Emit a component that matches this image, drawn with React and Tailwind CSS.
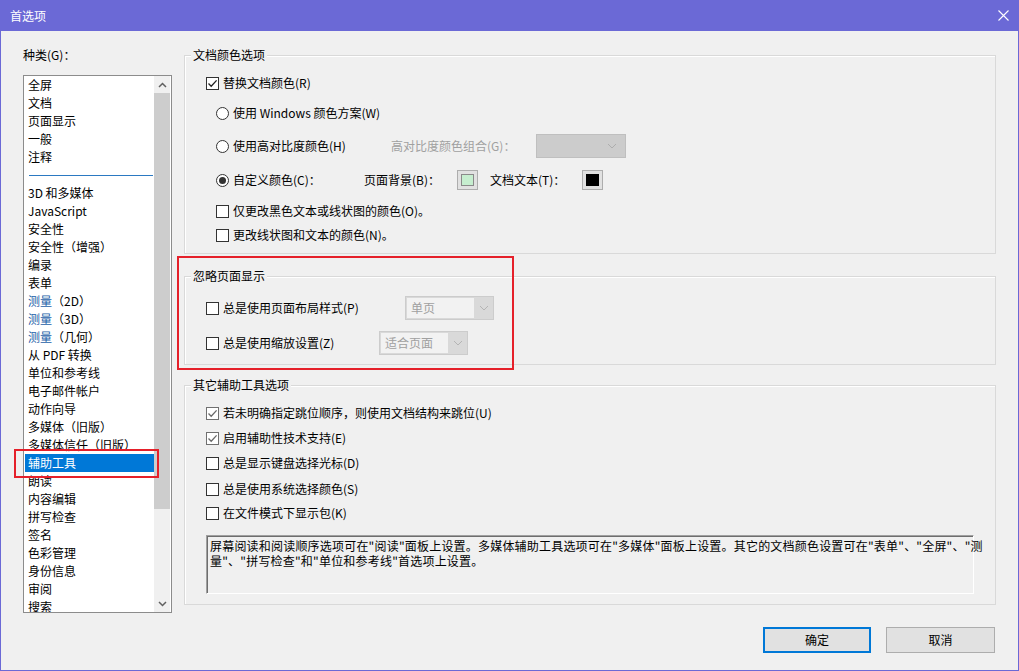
import React from "react";

const FONT = "font-['Noto_Sans_CJK_SC','Noto_Sans',sans-serif]";

function Check({ checked, dim }) {
  return (
    <span
      className={`w-[13px] h-[13px] border ${dim ? "border-[#707070]" : "border-[#333333]"} bg-white flex items-center justify-center shrink-0`}
    >
      {checked && (
        <svg width="11" height="11" viewBox="0 0 11 11">
          <path d="M1.5 5.5 L4.2 8.3 L9.6 2.4" fill="none" stroke={dim ? "#6a6a6a" : "#222222"} strokeWidth="1.3" />
        </svg>
      )}
    </span>
  );
}

function Radio({ checked }) {
  return (
    <span className="w-[13px] h-[13px] rounded-full border border-[#333333] bg-white flex items-center justify-center shrink-0">
      {checked && <span className="w-[7px] h-[7px] rounded-full bg-[#333333]" />}
    </span>
  );
}

function Chevron({ color = "#a0a0a0" }) {
  return (
    <svg width="10" height="6" viewBox="0 0 10 6">
      <path d="M1 1 L5 5 L9 1" fill="none" stroke={color} strokeWidth="1" />
    </svg>
  );
}

function Group({ title, className, children }) {
  return (
    <div className={`relative border border-[#d9d9d9] shadow-[inset_1px_1px_0_#ffffff] ${className}`}>
      <span className="absolute -top-[9px] left-[6px] px-[2px] bg-[#f0f0f0] leading-[16px] text-[12px] text-black">
        {title}
      </span>
      {children}
    </div>
  );
}

function Combo({ text, className }) {
  return (
    <div className={`h-[24px] border border-[#cccccc] bg-[#d9d9d9] flex ${className}`}>
      <div className="flex-1 m-[1px] bg-[#f2f2f2] text-[#a0a0a0] leading-[20px] pl-[4px] text-[12px]">{text}</div>
      <div className="w-[18px] flex items-center justify-center">
        <Chevron color="#b4b4b4" />
      </div>
    </div>
  );
}

const items = [
  "全屏",
  "文档",
  "页面显示",
  "一般",
  "注释",
  "__sep",
  "3D 和多媒体",
  "JavaScript",
  "安全性",
  "安全性（增强）",
  "编录",
  "表单",
  "__m（2D）",
  "__m（3D）",
  "__m（几何）",
  "从 PDF 转换",
  "单位和参考线",
  "电子邮件帐户",
  "动作向导",
  "多媒体（旧版）",
  "多媒体信任（旧版）",
  "__sel辅助工具",
  "朗读",
  "内容编辑",
  "拼写检查",
  "签名",
  "色彩管理",
  "身份信息",
  "审阅",
  "搜索",
];

function ListItem({ t }) {
  if (t === "__sep") {
    return (
      <div className="h-[18px] shrink-0 flex items-center pl-[5px] pr-[1px]">
        <div className="w-full h-px bg-[#2b79c2] mt-[1px]" />
      </div>
    );
  }
  if (t.startsWith("__sel")) {
    return (
      <div className="h-[18px] shrink-0 ml-[1px] bg-[#0078d7] text-white leading-[18px] pl-[3px] whitespace-nowrap">
        {t.slice(5)}
      </div>
    );
  }
  if (t.startsWith("__m")) {
    return (
      <div className="h-[18px] shrink-0 leading-[18px] pl-[4px] whitespace-nowrap">
        <span className="text-[#1d5fa8]">测量</span>
        {t.slice(3)}
      </div>
    );
  }
  return <div className="h-[18px] shrink-0 leading-[18px] pl-[4px] whitespace-nowrap">{t}</div>;
}

export default function App() {
  return (
    <div className={`w-[1019px] h-[671px] bg-[#f0f0f0] relative flex flex-col overflow-hidden text-[12px] text-black ${FONT}`}>
      {/* Title bar */}
      <div className="h-[31px] bg-[#6b69d6] flex items-center justify-between pl-[10px] pr-[10px] shrink-0">
        <span className="text-white text-[12px] leading-[16px]">首选项</span>
        <svg width="11" height="11" viewBox="0 0 11 11">
          <path d="M0.5 0.5 L10.5 10.5 M10.5 0.5 L0.5 10.5" stroke="#ffffff" strokeWidth="1.1" />
        </svg>
      </div>

      {/* Body */}
      <div className="flex-1 flex flex-col border-x border-b border-[#6b69d6]">
        <div className="flex pl-[22px] pt-[16px]">
          {/* Left column */}
          <div className="w-[149px] flex flex-col">
            <div className="leading-[16px] h-[16px]">种类(G)：</div>
            <div className="mt-[12px] h-[538px] border border-[#8c8c8c] bg-white flex overflow-hidden">
              <div className="flex-1 flex flex-col overflow-hidden">
                {items.map((t, i) => (
                  <ListItem key={i} t={t} />
                ))}
              </div>
              <div className="w-[16px] mr-[1px] bg-[#f0f0f0] flex flex-col">
                <div className="h-[17px] shrink-0 flex items-center justify-center">
                  <svg width="9" height="6" viewBox="0 0 9 6">
                    <path d="M1 5 L4.5 1.5 L8 5" fill="none" stroke="#606060" strokeWidth="1.5" />
                  </svg>
                </div>
                <div className="h-[416px] shrink-0 bg-[#cdcdcd]" />
                <div className="flex-1" />
                <div className="h-[17px] shrink-0 flex items-center justify-center">
                  <svg width="9" height="6" viewBox="0 0 9 6">
                    <path d="M1 1 L4.5 4.5 L8 1" fill="none" stroke="#606060" strokeWidth="1.5" />
                  </svg>
                </div>
              </div>
            </div>
          </div>

          {/* Right column */}
          <div className="ml-[12px] pt-[8px] w-[812px] flex flex-col">
            <Group title="文档颜色选项" className="h-[199px] pt-[17px] flex flex-col">
              <div className="h-[20px] flex items-center pl-[21px]">
                <Check checked />
                <span className="ml-[4px]">替换文档颜色(R)</span>
              </div>
              <div className="mt-[10px] h-[20px] flex items-center pl-[31px]">
                <Radio />
                <span className="ml-[4px]">使用 Windows 颜色方案(W)</span>
              </div>
              <div className="mt-[11px] h-[24px] flex items-center pl-[31px]">
                <div className="w-[175px] flex items-center">
                  <Radio />
                  <span className="ml-[4px]">使用高对比度颜色(H)</span>
                </div>
                <span className="w-[145px] text-[#a0a0a0]">高对比度颜色组合(G)：</span>
                <div className="w-[90px] h-[24px] bg-[#cccccc] border border-[#bfbfbf] flex items-center justify-end pr-[8px]">
                  <Chevron color="#adadad" />
                </div>
              </div>
              <div className="mt-[12px] h-[20px] flex items-center pl-[31px]">
                <div className="w-[148px] flex items-center">
                  <Radio checked />
                  <span className="ml-[4px]">自定义颜色(C)：</span>
                </div>
                <span className="w-[93px]">页面背景(B)：</span>
                <div className="w-[21px] h-[20px] border border-[#adadad] bg-[#e1e1e1] p-[3px]">
                  <div className="w-full h-full bg-[#c6eecf] border border-[#8a8a8a]" />
                </div>
                <span className="ml-[12px] w-[92px]">文档文本(T)：</span>
                <div className="w-[21px] h-[20px] border border-[#adadad] bg-[#e1e1e1] p-[3px]">
                  <div className="w-full h-full bg-black" />
                </div>
              </div>
              <div className="mt-[11px] h-[20px] flex items-center pl-[31px]">
                <Check />
                <span className="ml-[4px]">仅更改黑色文本或线状图的颜色(O)。</span>
              </div>
              <div className="mt-[4px] h-[20px] flex items-center pl-[31px]">
                <Check />
                <span className="ml-[4px]">更改线状图和文本的颜色(N)。</span>
              </div>
            </Group>

            <Group title="忽略页面显示" className="mt-[22px] h-[89px] pt-[19px] flex flex-col">
              <div className="h-[24px] flex items-center pl-[21px]">
                <div className="w-[199px] flex items-center">
                  <Check />
                  <span className="ml-[4px]">总是使用页面布局样式(P)</span>
                </div>
                <Combo text="单页" className="w-[89px]" />
              </div>
              <div className="mt-[11px] h-[24px] flex items-center pl-[21px]">
                <div className="w-[173px] flex items-center">
                  <Check />
                  <span className="ml-[4px]">总是使用缩放设置(Z)</span>
                </div>
                <Combo text="适合页面" className="w-[89px]" />
              </div>
            </Group>

            <Group title="其它辅助工具选项" className="mt-[20px] h-[220px] pt-[17px] flex flex-col">
              <div className="h-[20px] flex items-center pl-[21px]">
                <Check checked dim />
                <span className="ml-[4px]">若未明确指定跳位顺序，则使用文档结构来跳位(U)</span>
              </div>
              <div className="mt-[5px] h-[20px] flex items-center pl-[21px]">
                <Check checked dim />
                <span className="ml-[4px]">启用辅助性技术支持(E)</span>
              </div>
              <div className="mt-[5px] h-[20px] flex items-center pl-[21px]">
                <Check />
                <span className="ml-[4px]">总是显示键盘选择光标(D)</span>
              </div>
              <div className="mt-[6px] h-[20px] flex items-center pl-[21px]">
                <Check />
                <span className="ml-[4px]">总是使用系统选择颜色(S)</span>
              </div>
              <div className="mt-[4px] h-[20px] flex items-center pl-[21px]">
                <Check />
                <span className="ml-[4px]">在文件模式下显示包(K)</span>
              </div>
              <div className="ml-[21px] mt-[12px] w-[768px] h-[59px] border border-t-[#a0a0a0] border-l-[#a0a0a0] border-r-white border-b-white shadow-[inset_1px_1px_0_#6e6e6e] pl-[3px] pt-[2px] text-[12px] leading-[15px] tracking-[0.2px]">
                <div className="whitespace-nowrap">
                  屏幕阅读和阅读顺序选项可在"阅读"面板上设置。多媒体辅助工具选项可在"多媒体"面板上设置。其它的文档颜色设置可在"表单"、"全屏"、"测
                </div>
                <div className="whitespace-nowrap">量"、"拼写检查"和"单位和参考线"首选项上设置。</div>
              </div>
            </Group>
          </div>
        </div>

        {/* Buttons */}
        <div className="mt-[14px] flex justify-end gap-[15px] pr-[23px]">
          <button className="w-[108px] h-[26px] border-2 border-[#0078d7] bg-[#e1e1e1] text-[12px] leading-[20px]">确定</button>
          <button className="w-[109px] h-[26px] border border-[#adadad] bg-[#e1e1e1] text-[12px] leading-[20px]">取消</button>
        </div>
      </div>

      {/* Red annotation rectangles */}
      <div className="absolute left-[14px] top-[449px] w-[145px] h-[29px] border-2 border-[#e5202a] pointer-events-none" />
      <div className="absolute left-[177px] top-[256px] w-[337px] h-[114px] border-2 border-[#e5202a] pointer-events-none" />
    </div>
  );
}
